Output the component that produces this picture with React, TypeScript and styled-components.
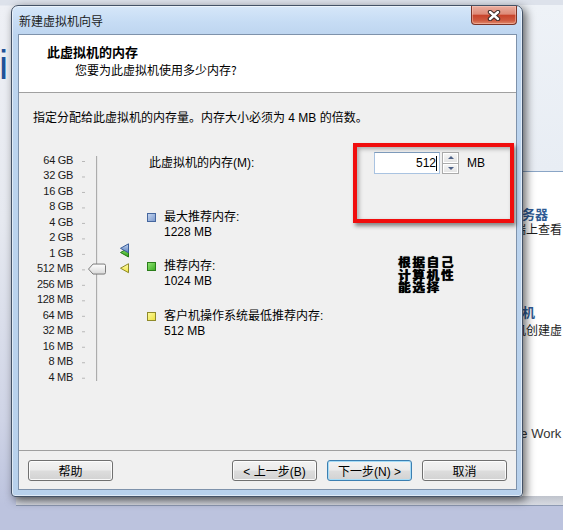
import styled, { createGlobalStyle } from "styled-components";

const SIZES = [
  "64 GB", "32 GB", "16 GB", "8 GB", "4 GB", "2 GB", "1 GB",
  "512 MB", "256 MB", "128 MB", "64 MB", "32 MB", "16 MB", "8 MB", "4 MB",
];
const ROW = 15.48;
const FIRST = 8;

const LEGEND = [
  { kind: "max", title: "最大推荐内存:", value: "1228 MB" },
  { kind: "rec", title: "推荐内存:", value: "1024 MB" },
  { kind: "min", title: "客户机操作系统最低推荐内存:", value: "512 MB" },
] as const;

type Kind = "max" | "rec" | "min";

const SWATCH: Record<Kind, { top: string; bottom: string; edge: string }> = {
  max: { top: "#c2d3ee", bottom: "#7f9cce", edge: "#45669e" },
  rec: { top: "#8ee270", bottom: "#3fae27", edge: "#2a7d1a" },
  min: { top: "#fdfa9a", bottom: "#ede244", edge: "#8f8a2a" },
};

const GlobalStyle = createGlobalStyle`
  html, body { margin: 0; padding: 0; }
  body {
    font-family: "Liberation Sans", "Noto Sans CJK SC", sans-serif;
    font-size: 12px;
    color: #000;
  }
`;

export default function App() {
  return (
    <>
      <GlobalStyle />
      <Desktop>
        <DesktopGlyph>i</DesktopGlyph>
        <BackWindow>
          <BackTopBand />
          <BackBanner />
          <BackList>
            <BackHeading $top={34}>务器</BackHeading>
            <BackText>端上查看</BackText>
            <BackHeading $top={68}>机</BackHeading>
            <BackText $top={3}>机创建虚</BackText>
            <BackFooterText>re Work</BackFooterText>
          </BackList>
          <BackBottomEdge />
        </BackWindow>

        <Dialog>
          <TitleBar>
            <TitleText>新建虚拟机向导</TitleText>
            <CloseButton>
              <svg width="14" height="11" viewBox="0 0 14 11">
                <path d="M3 2 L11 9 M11 2 L3 9" stroke="#3a2a28" strokeWidth="4.4" strokeLinecap="round" />
                <path d="M3 2 L11 9 M11 2 L3 9" stroke="#ffffff" strokeWidth="2.4" strokeLinecap="round" />
              </svg>
            </CloseButton>
          </TitleBar>

          <Client>
            <Header>
              <HeaderTitle>此虚拟机的内存</HeaderTitle>
              <HeaderSubtitle>您要为此虚拟机使用多少内存?</HeaderSubtitle>
            </Header>

            <Body>
              <Intro>指定分配给此虚拟机的内存量。内存大小必须为 4 MB 的倍数。</Intro>
              <MainRow>
                <SliderBlock>
                  <ScaleLabels>
                    {SIZES.map((s) => (
                      <ScaleLabel key={s}>{s}</ScaleLabel>
                    ))}
                  </ScaleLabels>
                  <MemorySlider />
                </SliderBlock>

                <Settings>
                  <FieldRow>
                    <FieldLabel>此虚拟机的内存(M):</FieldLabel>
                    <SpinInput>
                      512<Caret />
                    </SpinInput>
                    <Spinner>
                      <SpinButton $dir="up" />
                      <SpinButton $dir="down" />
                    </Spinner>
                    <Unit>MB</Unit>
                  </FieldRow>

                  <Legend>
                    {LEGEND.map((item) => (
                      <LegendItem key={item.kind}>
                        <Swatch $kind={item.kind} />
                        <LegendText>{item.title}</LegendText>
                        <LegendText>{item.value}</LegendText>
                      </LegendItem>
                    ))}
                  </Legend>
                </Settings>
              </MainRow>

              <HighlightBox />
              <HandNote>
                <NoteLine>根据自己</NoteLine>
                <NoteLine>计算机性</NoteLine>
                <NoteLine>能选择</NoteLine>
              </HandNote>
            </Body>

            <Footer>
              <Button>帮助</Button>
              <NavButtons>
                <Button>&lt; 上一步(B)</Button>
                <Button $default>下一步(N) &gt;</Button>
                <Button>取消</Button>
              </NavButtons>
            </Footer>
          </Client>
        </Dialog>
      </Desktop>
    </>
  );
}

function Marker({ cy, fill1, fill2, edge, id }: { cy: number; fill1: string; fill2: string; edge: string; id: string }) {
  return (
    <>
      <defs>
        <linearGradient id={id} x1="0" y1="0" x2="0" y2="1">
          <stop offset="0" stopColor={fill1} />
          <stop offset="1" stopColor={fill2} />
        </linearGradient>
      </defs>
      <path
        d={`M47.5 ${cy} L55.5 ${cy - 4.5} L55.5 ${cy + 4.5} Z`}
        fill={`url(#${id})`}
        stroke={edge}
        strokeWidth="1"
        strokeLinejoin="round"
      />
    </>
  );
}

function MemorySlider() {
  const cy = (i: number) => FIRST + i * ROW;
  const thumb = cy(7) - 0.3;
  return (
    <SliderSvg width="62" height="233" viewBox="0 0 62 233">
      <defs>
        <linearGradient id="thumbFill" x1="0" y1="0" x2="0" y2="1">
          <stop offset="0" stopColor="#ffffff" />
          <stop offset="1" stopColor="#d8d8d8" />
        </linearGradient>
      </defs>
      {SIZES.map((s, i) => (
        <line key={s} x1="9" x2="12" y1={cy(i) + 0.5} y2={cy(i) + 0.5} stroke="#b8b8b8" strokeWidth="1" />
      ))}
      <line x1="23.5" x2="23.5" y1="3" y2="228" stroke="#acacac" strokeWidth="1" />
      <line x1="24.5" x2="24.5" y1="3" y2="228" stroke="#e6e6e6" strokeWidth="1" />
      <path
        d={`M15.5 ${thumb} L20 ${thumb - 5} L31 ${thumb - 5} Q32.5 ${thumb - 5} 32.5 ${thumb - 3.5} L32.5 ${thumb + 3.5} Q32.5 ${thumb + 5} 31 ${thumb + 5} L20 ${thumb + 5} Z`}
        fill="url(#thumbFill)"
        stroke="#7b7b7b"
        strokeWidth="1"
      />
      <Marker id="mRec" cy={99.5} fill1="#8fe36f" fill2="#2fa11a" edge="#257a15" />
      <Marker id="mMax" cy={95.3} fill1="#c4d5f0" fill2="#5a80bf" edge="#3b5e9a" />
      <Marker id="mMin" cy={115.2} fill1="#fffcb0" fill2="#efe33a" edge="#8f8a28" />
    </SliderSvg>
  );
}

const Desktop = styled.div`
  position: relative;
  width: 563px;
  height: 530px;
  overflow: hidden;
  background: linear-gradient(180deg, #dde2eb 0, #dde2eb 5px, #eef0f5 6px, #e6e9f0 220px, #cfd4e6 420px, #bcc3de 505px);
`;

const DesktopGlyph = styled.div`
  position: absolute;
  left: -1px;
  top: 45px;
  font-family: "Liberation Sans", sans-serif;
  font-size: 41px;
  line-height: 40px;
  color: #22529a;
`;

const BackWindow = styled.div`
  position: absolute;
  left: 16px;
  top: 0;
  width: 600px;
  height: 506px;
  box-sizing: border-box;
  display: flex;
  flex-direction: column;
  background: #ffffff;
  border-bottom: 1px solid #8d99b2;
`;

const BackTopBand = styled.div`
  height: 5px;
  background: #dde2eb;
`;

const BackBanner = styled.div`
  height: 166px;
  background: linear-gradient(180deg, #eef2f7, #e8edf4);
  border-bottom: 1px solid #8aa5c6;
`;

const BackList = styled.div`
  display: flex;
  flex-direction: column;
  align-items: flex-start;
  padding-left: 506px;
  flex: 1;
`;

const BackHeading = styled.div<{ $top: number }>`
  margin-top: ${({ $top }) => $top}px;
  font-family: "Noto Sans CJK SC", sans-serif;
  font-size: 13px;
  font-weight: 700;
  line-height: 15px;
  color: #2f5b94;
`;

const BackText = styled.div<{ $top?: number }>`
  margin-top: ${({ $top }) => ($top ?? 0) + 1}px;
  margin-left: -8px;
  font-family: "Noto Sans CJK SC", sans-serif;
  font-size: 12px;
  line-height: 14px;
  color: #1c1c1c;
`;

const BackFooterText = styled.div`
  margin-top: 89px;
  margin-left: -6px;
  font-family: "Liberation Sans", sans-serif;
  font-size: 13px;
  line-height: 16px;
  color: #333333;
  white-space: nowrap;
`;

const BackBottomEdge = styled.div`
  height: 9px;
  background: linear-gradient(180deg, #bfc3cc, #d7dae1);
`;

const Dialog = styled.div`
  position: absolute;
  left: 11px;
  top: 5px;
  width: 512px;
  height: 492px;
  box-sizing: border-box;
  display: flex;
  flex-direction: column;
  border: 1px solid #445266;
  border-radius: 7px 7px 4px 4px;
  background: linear-gradient(180deg, #d6e7f9 0px, #c6dcf4 16px, #bdd5ef 30px, #b8d1ec 100%);
  box-shadow: 3px 3px 10px rgba(0, 0, 0, 0.6), inset 0 0 0 1px rgba(255, 255, 255, 0.55);
`;

const TitleBar = styled.div`
  height: 28px;
  box-sizing: border-box;
  display: flex;
  align-items: flex-start;
  padding-left: 7px;
  padding-right: 5px;
`;

const TitleText = styled.div`
  margin-top: 7px;
  font-family: "Noto Sans CJK SC", sans-serif;
  font-size: 12px;
  line-height: 16px;
  color: #1b1b1b;
`;

const CloseButton = styled.div`
  margin-left: auto;
  width: 46px;
  height: 19px;
  box-sizing: border-box;
  display: flex;
  align-items: center;
  justify-content: center;
  border: 1px solid #7a3427;
  border-top: none;
  border-radius: 0 0 4px 4px;
  background: linear-gradient(180deg, #eaae9f 0%, #de8a78 45%, #c8442c 52%, #cf5a40 80%, #e08a6c 100%);
  box-shadow: inset 0 0 0 1px rgba(255, 210, 200, 0.45);
`;

const Client = styled.div`
  flex: 1;
  margin: 0 5px 6px 6px;
  display: flex;
  flex-direction: column;
  border: 1px solid #7e92ab;
  background: #f0f0f0;
`;

const Header = styled.div`
  height: 58px;
  box-sizing: border-box;
  padding: 8px 0 0 28px;
  background: #ffffff;
  border-bottom: 1px solid #a0a0a0;
  font-family: "Noto Sans CJK SC", sans-serif;
`;

const HeaderTitle = styled.div`
  font-size: 13px;
  font-weight: 700;
  line-height: 17px;
`;

const HeaderSubtitle = styled.div`
  margin-top: 2px;
  padding-left: 28px;
  font-size: 12px;
  line-height: 15px;
`;

const Body = styled.div`
  position: relative;
  flex: 1;
  padding: 17px 0 0 14px;
`;

const Intro = styled.div`
  line-height: 16px;
`;

const MainRow = styled.div`
  display: flex;
  align-items: flex-start;
  margin-top: 26px;
`;

const SliderBlock = styled.div`
  display: flex;
  padding-top: 1px;
`;

const ScaleLabels = styled.div`
  width: 40px;
  display: grid;
  grid-template-rows: repeat(15, ${ROW}px);
`;

const ScaleLabel = styled.div`
  text-align: right;
  font-size: 11px;
  line-height: ${ROW}px;
  letter-spacing: -0.3px;
  color: #1a1a1a;
  white-space: nowrap;
`;

const SliderSvg = styled.svg`
  display: block;
`;

const Settings = styled.div`
  margin-left: 12px;
  display: flex;
  flex-direction: column;
`;

const FieldRow = styled.div`
  display: flex;
  align-items: center;
  height: 22px;
  padding-left: 2px;
`;

const FieldLabel = styled.div`
  width: 225px;
  line-height: 15px;
`;

const SpinInput = styled.div`
  width: 66px;
  height: 22px;
  box-sizing: border-box;
  display: flex;
  align-items: center;
  justify-content: flex-end;
  padding-right: 2px;
  background: #ffffff;
  border: 1px solid #a9c3e1;
  border-top-color: #7f9dbd;
  line-height: 15px;
`;

const Caret = styled.span`
  display: inline-block;
  width: 1px;
  height: 15px;
  background: #000;
`;

const Spinner = styled.div`
  margin-left: 2px;
  width: 17px;
  height: 22px;
  display: flex;
  flex-direction: column;
`;

const SpinButton = styled.div<{ $dir: "up" | "down" }>`
  flex: 1;
  display: flex;
  align-items: center;
  justify-content: center;
  border: 1px solid #ababab;
  margin-top: ${({ $dir }) => ($dir === "down" ? "-1px" : "0")};
  background: linear-gradient(180deg, #f6f6f6, #e3e3e3);
  box-shadow: inset 0 0 0 1px #ffffff;

  &::after {
    content: "";
    width: 0;
    height: 0;
    border-left: 3px solid transparent;
    border-right: 3px solid transparent;
    ${({ $dir }) =>
      $dir === "up" ? "border-bottom: 3px solid #4c6086;" : "border-top: 3px solid #4c6086;"}
  }
`;

const Unit = styled.div`
  margin-left: 8px;
  line-height: 15px;
`;

const Legend = styled.div`
  margin-top: 35.5px;
  display: flex;
  flex-direction: column;
  gap: 19.5px;
`;

const LegendItem = styled.div`
  display: grid;
  grid-template-columns: 17px auto;
  grid-auto-rows: 15px;
  align-items: center;
`;

const Swatch = styled.div<{ $kind: Kind }>`
  width: 9px;
  height: 9px;
  box-sizing: border-box;
  border: 1px solid ${({ $kind }) => SWATCH[$kind].edge};
  background: linear-gradient(135deg, ${({ $kind }) => SWATCH[$kind].top}, ${({ $kind }) => SWATCH[$kind].bottom});
`;

const LegendText = styled.div`
  grid-column: 2;
  line-height: 15px;
  &:first-of-type {
    grid-row: 1;
  }
`;

const HighlightBox = styled.div`
  position: absolute;
  left: 334px;
  top: 50px;
  width: 161px;
  height: 80px;
  box-sizing: border-box;
  border: 4px solid #f00d0d;
  box-shadow: 2px 3px 4px rgba(0, 0, 0, 0.45), inset 2px 2px 4px rgba(0, 0, 0, 0.3);
  pointer-events: none;
`;

const HandNote = styled.div`
  position: absolute;
  left: 379px;
  top: 163px;
  display: flex;
  flex-direction: column;
  font-family: "Noto Sans CJK SC", sans-serif;
  font-size: 12.5px;
  font-weight: 700;
  letter-spacing: 1.8px;
  color: #000;
  text-shadow: 0 0 1px rgba(0, 0, 0, 0.8), 0.4px 0 0 #000;
`;

const NoteLine = styled.div`
  height: 12.7px;
  line-height: 12.7px;
  white-space: nowrap;
`;

const Footer = styled.div`
  display: flex;
  padding: 9px 9px 8px 9px;
  border-top: 1px solid #a0a0a0;
`;

const NavButtons = styled.div`
  margin-left: auto;
  display: flex;
  gap: 10px;
`;

const Button = styled.button<{ $default?: boolean }>`
  width: 85px;
  height: 21px;
  padding: 0;
  font-family: "Liberation Sans", "Noto Sans CJK SC", sans-serif;
  font-size: 12px;
  color: #000;
  border: 1px solid ${({ $default }) => ($default ? "#3c7fb1" : "#707070")};
  border-radius: 3px;
  background: linear-gradient(180deg, #f3f3f3 0%, #ebebeb 48%, #dddddd 52%, #d2d2d2 100%);
  box-shadow: inset 0 0 0 1px ${({ $default }) => ($default ? "#a6dcf7" : "rgba(255,255,255,0.85)")};
`;
